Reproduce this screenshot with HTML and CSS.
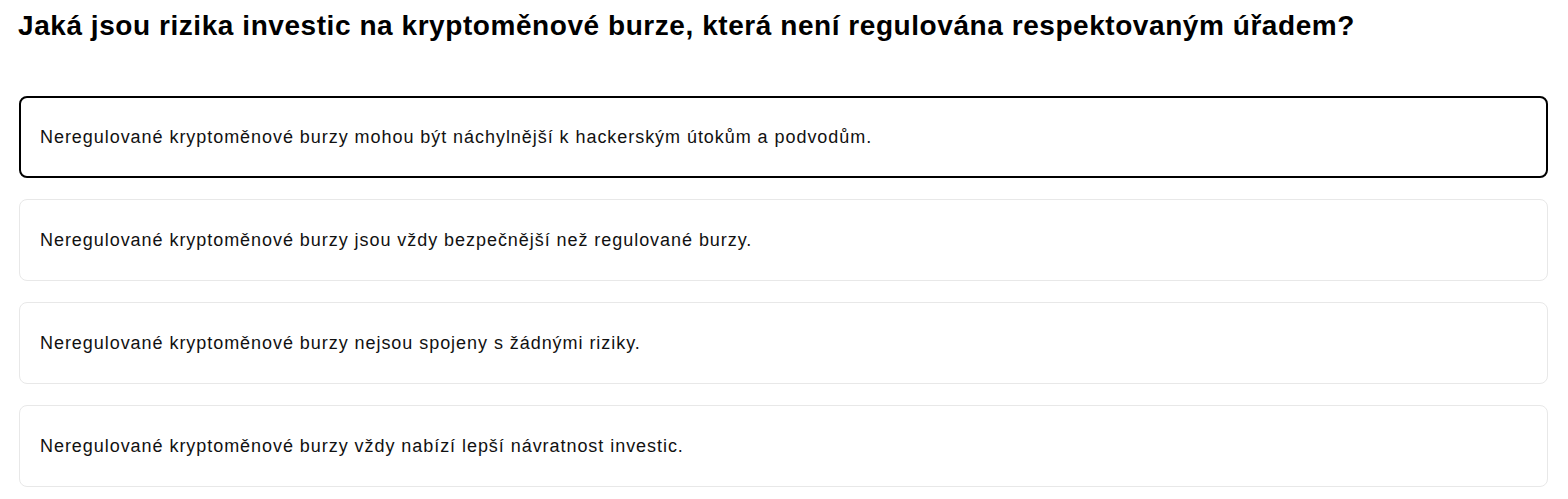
FILE: index.html
```html
<!DOCTYPE html>
<html lang="cs">
<head>
<meta charset="utf-8">
<link rel="stylesheet" href="styles.css">
</head>
<body>
<main class="quiz">
  <h1 class="question">Jaká jsou rizika investic na kryptoměnové burze, která není regulována respektovaným úřadem?</h1>
  <ul class="answers">
    <li class="answer selected">Neregulované kryptoměnové burzy mohou být náchylnější k hackerským útokům a podvodům.</li>
    <li class="answer">Neregulované kryptoměnové burzy jsou vždy bezpečnější než regulované burzy.</li>
    <li class="answer">Neregulované kryptoměnové burzy nejsou spojeny s žádnými riziky.</li>
    <li class="answer">Neregulované kryptoměnové burzy vždy nabízí lepší návratnost investic.</li>
  </ul>
</main>
</body>
</html>
```

FILE: styles.css
```css
html, body {
  margin: 0;
  padding: 0;
  background: #ffffff;
}
body {
  font-family: "Liberation Sans", Arial, sans-serif;
  color: #000;
}
.quiz {
  padding: 0 20px 0 19px;
}
.question {
  margin: 0 0 0 -1px;
  padding-top: 8px;
  font-size: 28px;
  line-height: 36px;
  font-weight: 700;
  letter-spacing: 0.56px;
  color: #000;
}
.answers {
  list-style: none;
  margin: 52px 0 0 0;
  padding: 0;
  display: flex;
  flex-direction: column;
  gap: 21px;
}
.answer {
  box-sizing: border-box;
  height: 82px;
  display: flex;
  align-items: center;
  padding: 0 20px;
  border: 1px solid #e8e8e8;
  border-radius: 8px;
  font-size: 18px;
  letter-spacing: 0.95px;
  color: #111;
}
.answer.selected {
  border: 2px solid #000;
  padding: 0 19px;
}
```
